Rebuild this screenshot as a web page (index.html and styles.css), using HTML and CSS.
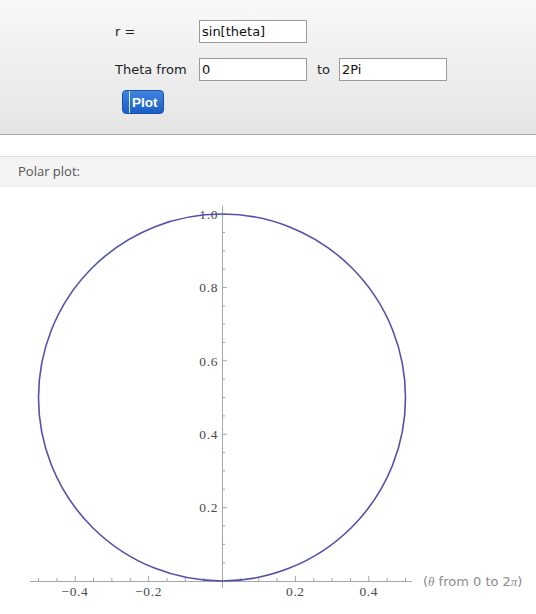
FILE: index.html
```html
<!DOCTYPE html>
<html lang="en">
	<head>
		<meta charset="UTF-8" />
		<title>Polar plot</title>
		<link rel="stylesheet" href="styles.css">
	</head>
	<body>
		<form class="controls">
			<div class="row">
				<label for="expr">r =</label>
				<input type="text" id="expr" value="sin[theta]" />
			</div>
			<div class="row">
				<label for="from">Theta from</label>
				<input type="text" id="from" value="0" />
				<label for="to" class="to">to</label>
				<input type="text" id="to" value="2Pi" />
			</div>
			<button type="button" class="plot-btn"><span>Plot</span></button>
		</form>

		<div class="spacer"></div>

		<div class="pod-title">Polar plot:</div>

		<svg class="plot" width="536" height="426" viewBox="0 188 536 426">
			<g class="axes">
				<path d="M30 582.5H412M222.5 207V589" />
				<!-- x ticks, every 0.05 -->
				<path d="M38.5 582v-3M56.9 582v-3M75.2 582v-5M93.6 582v-3M111.9 582v-3M130.3 582v-3M148.6 582v-5M167 582v-3M185.3 582v-3M203.7 582v-3M240.4 582v-3M258.7 582v-3M277.1 582v-3M295.4 582v-5M313.8 582v-3M332.1 582v-3M350.5 582v-3M368.8 582v-5M387.2 582v-3M405.5 582v-3" />
				<!-- y ticks -->
				<path d="M222 563.7h3M222 545.3h3M222 527h3M222 508.6h5M222 490.3h3M222 471.9h3M222 453.6h3M222 435.2h5M222 416.9h3M222 398.5h3M222 380.2h3M222 361.8h5M222 343.5h3M222 325.1h3M222 306.8h3M222 288.4h5M222 270.1h3M222 251.7h3M222 233.4h3M222 215h5" />
			</g>
			<g class="tick-labels x-labels">
				<text x="75" y="597">−0.4</text>
				<text x="148.6" y="597">−0.2</text>
				<text x="295.4" y="597">0.2</text>
				<text x="368.8" y="597">0.4</text>
			</g>
			<g class="tick-labels y-labels">
				<text x="218" y="220">1.0</text>
				<text x="218" y="293">0.8</text>
				<text x="218" y="366.5">0.6</text>
				<text x="218" y="440">0.4</text>
				<text x="218" y="513.4">0.2</text>
			</g>
			<circle class="curve" cx="222" cy="398.5" r="183.5" />
			<text class="axis-label" x="423" y="587">(<tspan class="sym">θ</tspan> from 0 to 2<tspan class="sym">π</tspan>)</text>
		</svg>
	</body>
</html>
```

FILE: styles.css
```css
html, body {
	margin: 0;
	background-color: white;
	overflow: hidden;
}
.controls {
	margin: 0;
	height: 114px;
	padding: 20px 0 0 115px;
	border-bottom: 1px solid #a8a8a8;
	background: linear-gradient(#f8f8f8, #e5e5e5);
	font-family: "DejaVu Sans", Verdana, sans-serif;
	font-size: 13px;
	color: #222;
	box-sizing: content-box;
}
.controls .row {
	display: flex;
	align-items: center;
	height: 23px;
	margin-bottom: 15px;
}
.controls .row + .row {
	margin-bottom: 9px;
}
.controls label {
	width: 84px;
}
.controls label.to {
	width: 22px;
	padding-left: 10px;
}
.controls input {
	width: 108px;
	height: 23px;
	box-sizing: border-box;
	margin: 0;
	padding: 0 2px;
	border: 1px solid #9a9a9a;
	background: white;
	font-family: "DejaVu Sans", Verdana, sans-serif;
	font-size: 13px;
	color: #111;
	outline: none;
}
.plot-btn {
	display: flex;
	align-items: stretch;
	height: 24px;
	margin: 0 0 0 7px;
	padding: 0 5px 0 6px;
	border: 1px solid #1b52a8;
	border-radius: 4px;
	background: linear-gradient(#3f85de, #1c5fc4);
	font-family: "Liberation Sans", Arial, sans-serif;
	font-weight: bold;
	font-size: 13.5px;
	color: white;
	cursor: pointer;
}
.plot-btn span {
	display: flex;
	align-items: center;
	padding-left: 2px;
	border-left: 1px solid #d6e4fa;
}
.spacer {
	height: 21px;
}
.pod-title {
	height: 29px;
	line-height: 29px;
	padding-left: 18px;
	border-top: 1px solid #dcdcdc;
	border-bottom: 1px solid #e8e8e8;
	background-color: #f4f4f4;
	font-family: "Open Sans", sans-serif;
	font-size: 13px;
	color: #555;
}
.plot {
	display: block;
}
.axes path {
	fill: none;
	stroke: #a6a6a6;
	stroke-width: 1;
}
.curve {
	fill: none;
	stroke: #5252a8;
	stroke-width: 1.6;
}
.tick-labels text {
	font-family: "Liberation Serif", "Times New Roman", serif;
	font-size: 13.5px;
	letter-spacing: 0.6px;
	fill: #4a4a4a;
}
.x-labels text {
	text-anchor: middle;
}
.y-labels text {
	text-anchor: end;
}
.axis-label {
	font-family: "DejaVu Sans", sans-serif;
	font-size: 13px;
	fill: #8c8c8c;
}
.axis-label .sym {
	font-family: "Liberation Serif", serif;
	font-style: italic;
}
```
